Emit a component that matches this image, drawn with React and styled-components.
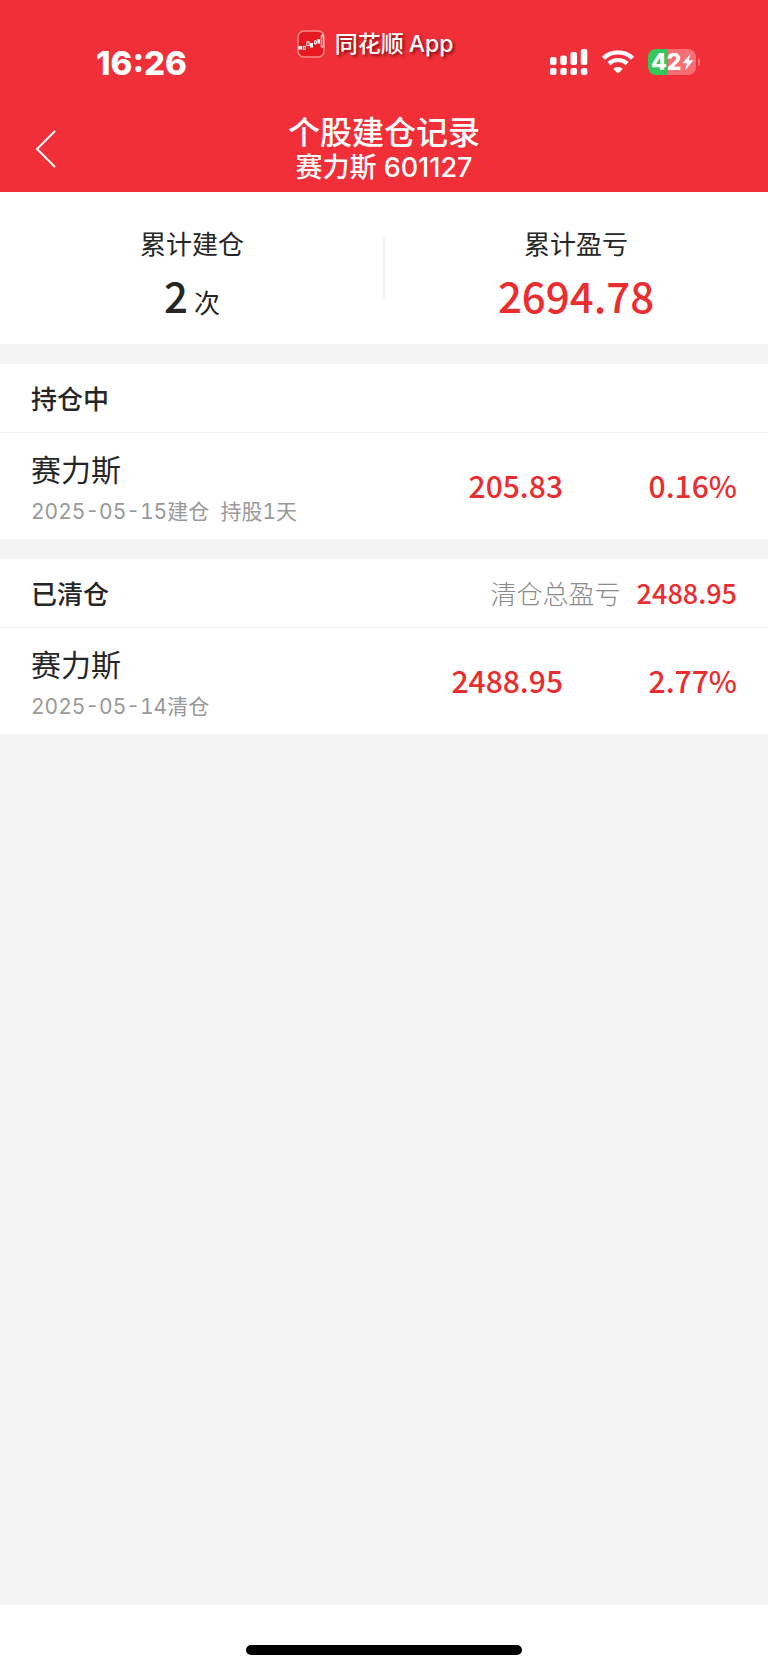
import React from "react";
import styled, { createGlobalStyle } from "styled-components";

const GlobalStyle = createGlobalStyle`
  * { box-sizing: border-box; }
  body { margin: 0; }
  h1, h2, p, ul, dl, dd { margin: 0; padding: 0; }
`;

const cjk = '"Noto Sans CJK SC", sans-serif';
const latin = 'Inter, "Noto Sans CJK SC", sans-serif';
const red = "#ea2e30";

const Page = styled.div`
  min-height: 100vh;
  display: flex;
  flex-direction: column;
  background: #f4f4f4;
  color: #262626;
  font-family: ${cjk};
`;

const Header = styled.header`
  background: #f12f38;
  color: #fff;
`;

const StatusBar = styled.div`
  height: 106px;
  display: grid;
  grid-template-columns: 1fr auto 1fr;
`;

const Time = styled.time`
  padding: 43px 0 0 96px;
  font: 800 33px/40px ${latin};
`;

const Watermark = styled.div`
  height: 88px;
  padding-right: 18px;
  display: flex;
  align-items: center;
  gap: 10px;
  font: 500 23px/32px ${latin};
  text-shadow: 2px 2px 3px rgba(90, 0, 0, 0.7);
`;

const AppText = styled.span`
  display: flex;
  gap: 5px;
`;

const StatusIcons = styled.div`
  height: 124px;
  padding-right: 68px;
  display: flex;
  justify-content: flex-end;
  align-items: center;
  gap: 14px;
`;

const Battery = styled.div`
  display: flex;
  align-items: center;
  gap: 2px;
`;

const BatteryBody = styled.div`
  width: 48px;
  height: 26px;
  padding-left: 3px;
  display: flex;
  align-items: center;
  border-radius: 8px;
  background: linear-gradient(90deg, #34c759 42%, #f76e74 42%);
  font: 800 23px/26px ${latin};
`;

const BatteryTip = styled.div`
  width: 2px;
  height: 8px;
  border-radius: 0 3px 3px 0;
  background: #f76e74;
`;

const NavBar = styled.nav`
  height: 86px;
  padding: 0 32px;
  display: grid;
  grid-template-columns: 1fr auto 1fr;
  align-items: center;
`;

const BackButton = styled.button`
  width: 40px;
  height: 48px;
  padding: 0;
  border: 0;
  background: none;
  color: inherit;
  display: flex;
  align-items: center;
`;

const Titles = styled.div`
  text-align: center;
`;

const Title = styled.h1`
  font: 500 32px/38px ${latin};
`;

const Subtitle = styled.p`
  font: 500 27px/32px ${latin};
`;

const Summary = styled.dl`
  height: 152px;
  display: flex;
  align-items: center;
  background: #fff;
`;

const Stat = styled.div`
  flex: 1;
  display: flex;
  flex-direction: column;
  align-items: center;
  gap: 4px;
  padding-top: 10px;
`;

const Divider = styled.div`
  width: 2px;
  height: 60px;
  margin: 0 -1px;
  background: #f1f1f1;
`;

const Label = styled.dt`
  font-size: 26px;
  line-height: 40px;
`;

const StatValue = styled.dd`
  display: flex;
  align-items: baseline;
  gap: 6px;
  height: 56px;
  font-weight: 500;
  font-size: 42px;
  line-height: 56px;
  color: ${(p) => (p.$up ? red : "inherit")};
`;

const Unit = styled.span`
  font-size: 26px;
  font-weight: 400;
`;

const Section = styled.section`
  margin-top: 20px;
  background: #fff;
`;

const SectionHead = styled.div`
  height: 69px;
  padding: 0 31px;
  display: flex;
  align-items: center;
  gap: 16px;
  border-bottom: 1px solid #f1f1f1;
`;

const SectionTitle = styled.h2`
  flex: 1;
  font-size: 26px;
  line-height: 40px;
  font-weight: 500;
`;

const TotalLabel = styled.span`
  font-size: 26px;
  line-height: 40px;
  font-weight: 300;
  color: #8a8a8a;
`;

const Amount = styled.span`
  min-width: ${(p) => p.$width || 0}px;
  text-align: right;
  font-weight: 500;
  font-size: ${(p) => p.$size || 30}px;
  line-height: 40px;
  color: ${red};
`;

const List = styled.ul`
  list-style: none;
`;

const Row = styled.li`
  height: 106px;
  padding: 0 31px 2px;
  display: flex;
  align-items: center;
`;

const Info = styled.div`
  flex: 1;
  padding-top: 12px;
`;

const Name = styled.p`
  font-size: 30px;
  line-height: 42px;
`;

const Note = styled.p`
  font: 400 21px/46px ${latin};
  font-feature-settings: "tnum";
  color: #999;
  white-space: pre;
`;

const HomeArea = styled.footer`
  height: 65px;
  margin-top: auto;
  padding-top: 24px;
  display: flex;
  justify-content: center;
  align-items: center;
  background: #fff;
`;

const HomeBar = styled.div`
  width: 36%;
  height: 10px;
  border-radius: 5px;
  background: #000;
`;

function AppLogo() {
  return (
    <svg width="28" height="28" viewBox="0 0 28 28" fill="none" aria-hidden="true">
      <rect x="1" y="1" width="26" height="26" rx="6" fill="#e5191f" stroke="#fa8c8d" strokeWidth="1.5" />
      <g fill="#fff">
        <rect x="1.5" y="16" width="3.5" height="3.5" />
        <rect x="13" y="13" width="3" height="4.5" />
        <rect x="20.5" y="9" width="2.5" height="4.5" />
      </g>
      <g stroke="#fff" strokeWidth="0.9">
        <rect x="6.2" y="16.4" width="2" height="3" />
        <rect x="9.8" y="12" width="2.4" height="3.4" />
        <path d="M11 11v1" />
        <rect x="17.4" y="11" width="2" height="2.6" />
        <path d="M18.4 10v1M18.4 13.6v1" />
        <rect x="24.2" y="6" width="2" height="11" />
        <path d="M25.2 4v2" />
      </g>
    </svg>
  );
}

function Signal() {
  return (
    <svg width="38" height="26" viewBox="0 0 38 26" fill="#fff" aria-hidden="true">
      <rect x="0" y="8" width="6.5" height="8" rx="2" />
      <rect x="10.3" y="6.5" width="6.5" height="9.5" rx="2" />
      <rect x="20.5" y="3" width="6.5" height="13" rx="2" />
      <rect x="30.8" y="0" width="6.5" height="16" rx="2" />
      <rect x="0" y="19" width="6.5" height="7" rx="2" />
      <rect x="10.3" y="19" width="6.5" height="7" rx="2" />
      <rect x="20.5" y="19" width="6.5" height="7" rx="2" />
      <rect x="30.8" y="19" width="6.5" height="7" rx="2" />
    </svg>
  );
}

function Wifi() {
  return (
    <svg width="32" height="24" viewBox="0 0 32 24" fill="none" aria-hidden="true">
      <path d="M1.5 8.2C9.5.4 22.5.4 30.5 8.2" stroke="#fff" strokeWidth="4.4" />
      <path d="M6.9 13.6C12 8.8 20 8.8 25.1 13.6" stroke="#fff" strokeWidth="4.2" />
      <path d="M11.3 19C14 16.4 18 16.4 20.7 19L16 23.6Z" fill="#fff" />
    </svg>
  );
}

function Bolt() {
  return (
    <svg width="12" height="18" viewBox="0 0 12 18" fill="#fff" aria-hidden="true">
      <path d="M8.5.5L.5 10.2H5L3 17.5L11.5 7.3H6.8Z" />
    </svg>
  );
}

function Chevron() {
  return (
    <svg width="26" height="40" viewBox="0 0 26 40" fill="none" aria-hidden="true">
      <path d="M23 2L5 20L23 38" stroke="#fff" strokeWidth="2" />
    </svg>
  );
}

function Position({ name, note, profit, rate }) {
  return (
    <Row>
      <Info>
        <Name>{name}</Name>
        <Note>{note}</Note>
      </Info>
      <Amount>{profit}</Amount>
      <Amount $width={174}>{rate}</Amount>
    </Row>
  );
}

export default function App() {
  return (
    <Page>
      <GlobalStyle />
      <Header>
        <StatusBar>
          <Time>16:26</Time>
          <Watermark>
            <AppLogo />
            <AppText>
              <span>同花顺</span>
              <span>App</span>
            </AppText>
          </Watermark>
          <StatusIcons>
            <Signal />
            <Wifi />
            <Battery>
              <BatteryBody>
                42
                <Bolt />
              </BatteryBody>
              <BatteryTip />
            </Battery>
          </StatusIcons>
        </StatusBar>
        <NavBar>
          <BackButton type="button" aria-label="返回">
            <Chevron />
          </BackButton>
          <Titles>
            <Title>个股建仓记录</Title>
            <Subtitle>赛力斯 601127</Subtitle>
          </Titles>
        </NavBar>
      </Header>
      <main>
        <Summary>
          <Stat>
            <Label>累计建仓</Label>
            <StatValue>
              <span>2</span>
              <Unit>次</Unit>
            </StatValue>
          </Stat>
          <Divider />
          <Stat>
            <Label>累计盈亏</Label>
            <StatValue $up>2694.78</StatValue>
          </Stat>
        </Summary>
        <Section>
          <SectionHead>
            <SectionTitle>持仓中</SectionTitle>
          </SectionHead>
          <List>
            <Position name="赛力斯" note="2025-05-15建仓  持股1天" profit="205.83" rate="0.16%" />
          </List>
        </Section>
        <Section>
          <SectionHead>
            <SectionTitle>已清仓</SectionTitle>
            <TotalLabel>清仓总盈亏</TotalLabel>
            <Amount $size={27}>2488.95</Amount>
          </SectionHead>
          <List>
            <Position name="赛力斯" note="2025-05-14清仓" profit="2488.95" rate="2.77%" />
          </List>
        </Section>
      </main>
      <HomeArea>
        <HomeBar />
      </HomeArea>
    </Page>
  );
}
